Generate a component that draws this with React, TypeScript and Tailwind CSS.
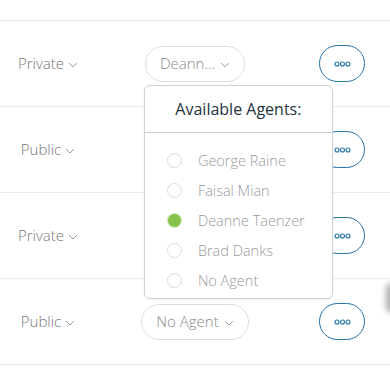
const agents = ['George Raine', 'Faisal Mian', 'Deanne Taenzer', 'Brad Danks', 'No Agent']

function Chevron({ className = '' }: { className?: string }) {
  return (
    <svg className={className} width="10" height="6" viewBox="0 0 10 6" fill="none">
      <path d="M1 1l4 4 4-4" stroke="currentColor" strokeWidth="1" />
    </svg>
  )
}

function MoreButton() {
  return (
    <button className="w-[46px] h-[37px] rounded-full border-[1.5px] border-[#2274a9] flex items-center justify-center bg-white">
      <svg width="17" height="6" viewBox="0 0 17 6" fill="none">
        <circle cx="3" cy="3" r="2" stroke="#2274a9" strokeWidth="1.1" />
        <circle cx="8.5" cy="3" r="2" stroke="#2274a9" strokeWidth="1.1" />
        <circle cx="14" cy="3" r="2" stroke="#2274a9" strokeWidth="1.1" />
      </svg>
    </button>
  )
}

function AgentMenu() {
  return (
    <div className="absolute top-[39px] left-[-1px] w-[189px] h-[214px] bg-white border border-[#cfd3d6] rounded-[6px] shadow-[0_1px_3px_rgba(0,0,0,0.06)] z-10">
      <div className="h-[47px] flex items-center justify-center border-b border-[#c9cdd0] text-[16px] text-[#26333d]">
        Available Agents:
      </div>
      <div className="pt-[13px]">
        {agents.map((a) => (
          <div key={a} className="h-[30px] flex items-center pl-[22px]">
            {a === 'Deanne Taenzer' ? (
              <span className="w-[15px] h-[15px] rounded-full border border-[#d7e8c8] bg-[#86c34a] shrink-0" />
            ) : (
              <span className="w-[15px] h-[15px] rounded-full border border-[#dcdcdc] bg-white shrink-0" />
            )}
            <span className="ml-[16px] text-[14.5px] text-[#9a9a9a] font-light">{a}</span>
          </div>
        ))}
      </div>
    </div>
  )
}

function Row({ access, agent, open }: { access: string; agent?: string; open?: boolean }) {
  return (
    <div className="h-[86px] flex items-center border-b border-[#ececec]">
      <div className="w-[96px] flex items-center justify-center gap-[4px] text-[15px] text-[#777] font-light">
        {access}
        <Chevron className="text-[#9a9a9a] mt-[2px]" />
      </div>
      <div className="w-[198px] flex justify-center">
        {agent && (
          <div className="relative">
            <div className="h-[36px] px-[14px] rounded-full border border-[#dddddd] flex items-center gap-[5px] text-[15px] text-[#8a8a8a] font-light bg-white">
              {agent}
              <Chevron className="text-[#a5a5a5] mt-[2px]" />
            </div>
            {open && <AgentMenu />}
          </div>
        )}
      </div>
      <div className="w-[96px] flex justify-center">
        <MoreButton />
      </div>
    </div>
  )
}

export default function App() {
  return (
    <div className="relative w-[390px] h-[390px] bg-white overflow-hidden" style={{ fontFamily: '"Open Sans", sans-serif' }}>
      <div className="h-[21px] border-b border-[#ececec]" />
      <Row access="Private" agent="Deann..." open />
      <Row access="Public" />
      <Row access="Private" />
      <Row access="Public" agent="No Agent" />
      <div className="absolute right-[-9px] top-[283px] w-[13px] h-[30px] rounded-full bg-[#8a8a8a] blur-[3px] opacity-70" />
    </div>
  )
}
